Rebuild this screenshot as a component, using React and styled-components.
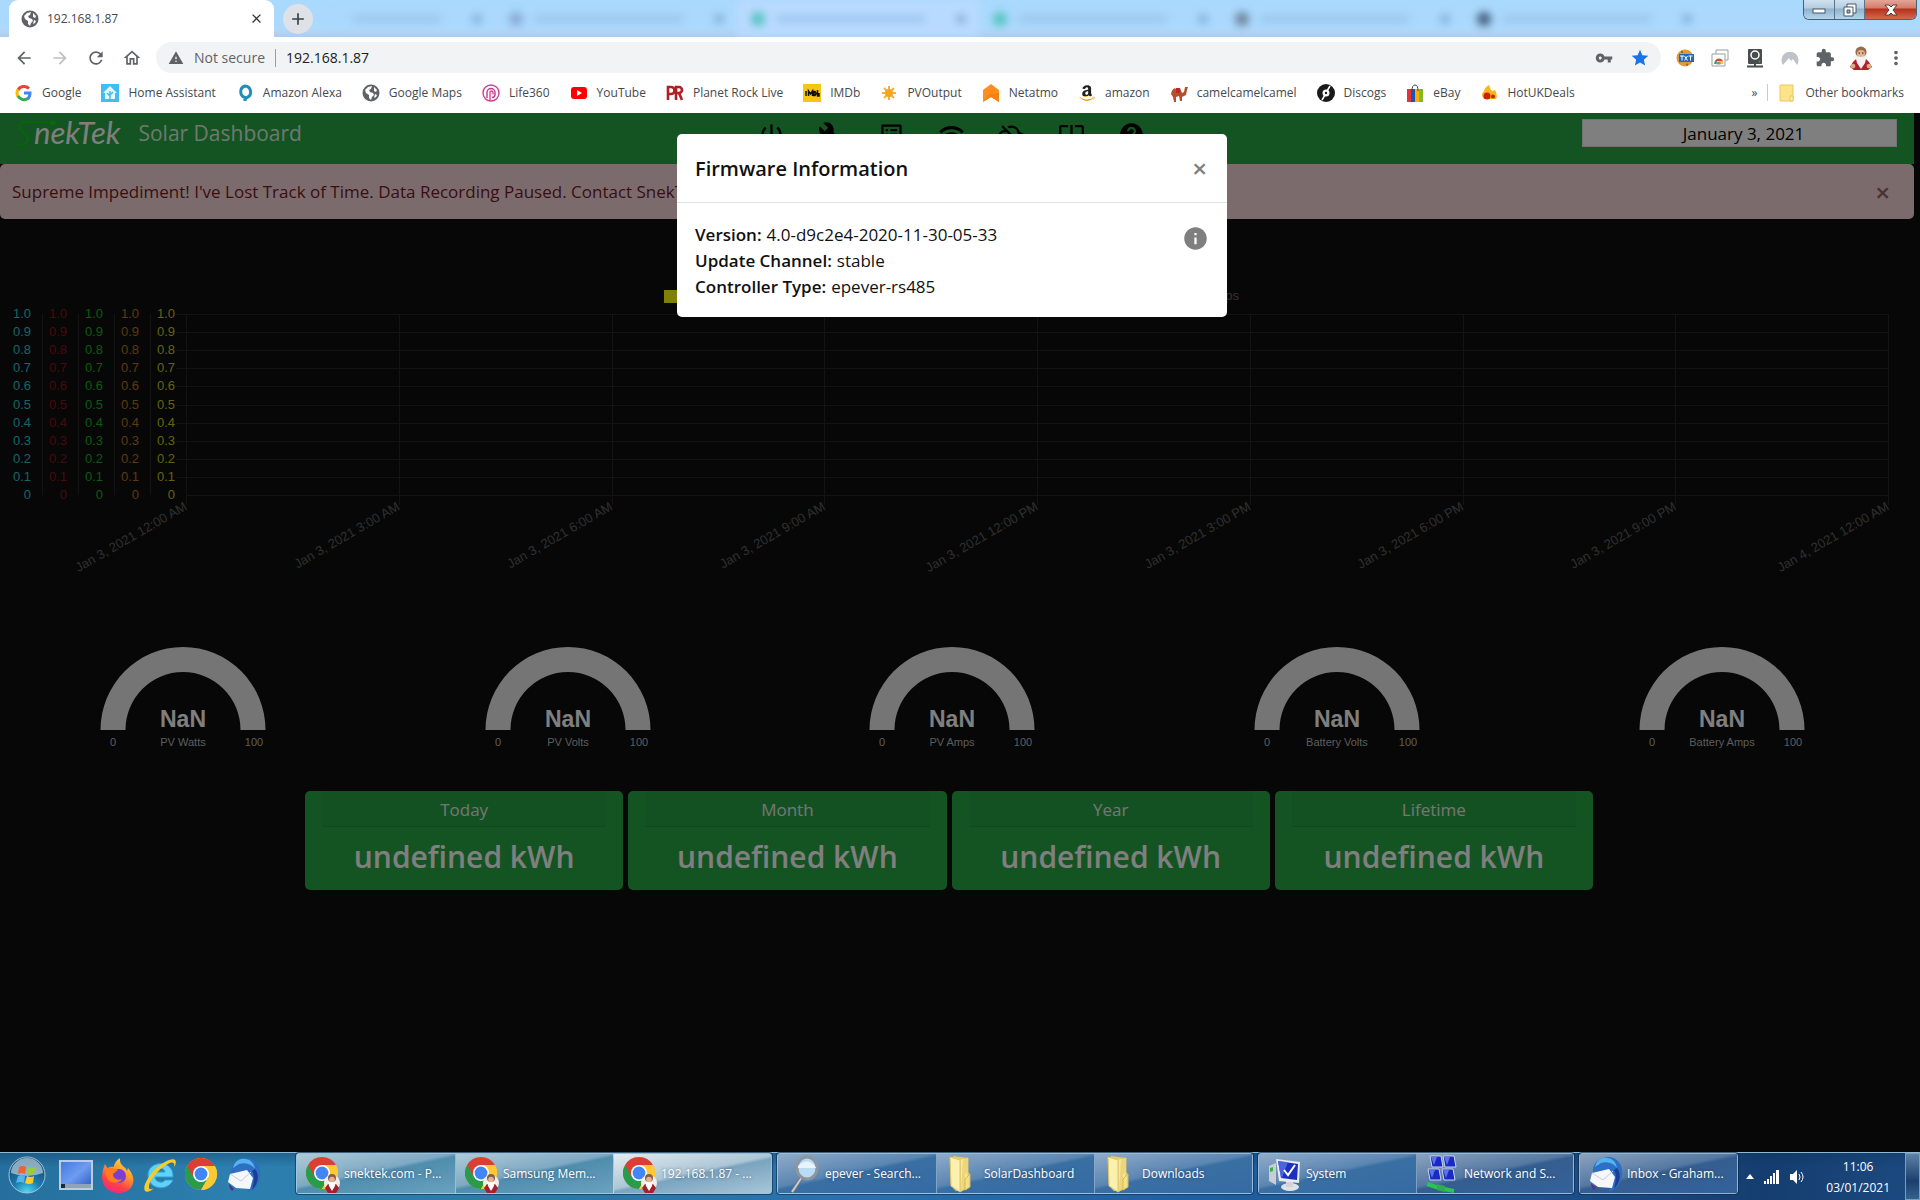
import React from "react";
import styled, { createGlobalStyle } from "styled-components";
import {
  MdPowerSettingsNew,
  MdBuild,
  MdOutlineListAlt,
  MdWifi,
  MdOutlineCloudOff,
  MdSystemUpdateAlt,
  MdHelp,
  MdInfo,
  MdArrowBack,
  MdArrowForward,
  MdRefresh,
  MdOutlineHome,
  MdWarning,
  MdVpnKey,
  MdStar,
  MdExtension,
  MdMoreVert,
  MdPublic,
  MdClose,
  MdAdd,
} from "react-icons/md";
import { FaAmazon } from "react-icons/fa";

const UI = `"Open Sans", "Noto Sans", sans-serif`;
const ARIAL = `"Liberation Sans", Arial, sans-serif`;

const Global = createGlobalStyle`
  *, *::before, *::after { box-sizing: border-box; }
  body { margin: 0; font-family: ${UI}; background: #0e0e0e; }
  button, input { font: inherit; color: inherit; }
  button { background: none; border: 0; padding: 0; cursor: pointer; }
  a { color: inherit; text-decoration: none; }
  svg { display: block; flex: none; }
`;

const Screen = styled.div`
  display: flex;
  flex-direction: column;
  min-height: 100vh;
  overflow: hidden;
`;

/* ---------- browser window ---------- */

const TabStrip = styled.div`
  display: flex;
  align-items: flex-end;
  height: 37px;
  padding: 0 3px 0 9px;
  background: linear-gradient(#a9d9fd 0, #acd9fd 28px, #b4d3f0 32px, #a9cdf0 37px);
  overflow: hidden;
`;

const Tab = styled.div`
  display: flex;
  align-items: center;
  gap: 8px;
  flex: none;
  width: 265px;
  height: 37px;
  padding: 0 8px 0 12px;
  border-radius: 9px 9px 0 0;
  background: #fff;
  color: #45494d;
  font-size: 12px;
`;

const TabTitle = styled.span`
  flex: 1;
`;

const NewTab = styled.button`
  display: grid;
  place-items: center;
  flex: none;
  align-self: center;
  width: 30px;
  height: 30px;
  margin-left: 9px;
  border-radius: 50%;
  background: #dee1e6;
  color: #3c4043;
`;

const GhostTabs = styled.div`
  display: flex;
  flex: 1;
  min-width: 0;
  height: 37px;
  filter: blur(4px);
`;

const GhostTab = styled.div`
  display: flex;
  align-items: center;
  gap: 12px;
  flex: 0 0 242px;
  width: 242px;
  height: 37px;
  padding: 0 14px;
  background: ${(p) => (p.$lit ? "#b9daff" : "transparent")};
  &:first-child {
    flex-basis: 182px;
  }
`;

const GhostIcon = styled.span`
  width: 14px;
  height: 14px;
  border-radius: 50%;
  background: ${(p) => p.$tone};
`;

const GhostTitle = styled.span`
  flex: 1;
  height: 6px;
  background: #97c2ea;
`;

const GhostClose = styled.span`
  width: 8px;
  height: 8px;
  margin: 0 0 0 20px;
  background: #7aa5d2;
`;

const WindowButtons = styled.div`
  display: flex;
  flex: none;
  align-self: flex-start;
  border: 1px solid #4a5f70;
  border-top: 0;
  border-radius: 0 0 6px 6px;
  overflow: hidden;
`;

const WindowButton = styled.button`
  display: grid;
  place-items: center;
  width: ${(p) => (p.$close ? "52px" : "30px")};
  height: 19px;
  border-left: ${(p) => (p.$first ? "0" : "1px solid #5d7486")};
  background: ${(p) =>
    p.$close
      ? "linear-gradient(#e3a598 0, #d37c6b 8px, #b8301a 9px, #d06a4c 19px)"
      : "linear-gradient(#cfe0ee 0, #b5cde0 8px, #8fb1cb 9px, #b4d6ec 19px)"};
`;

const Toolbar = styled.div`
  display: flex;
  align-items: center;
  height: 41px;
  padding: 0 15px 0 14px;
  background: #fff;
  color: #5f6368;
`;

const NavButtons = styled.div`
  display: flex;
  gap: 16px;
  margin-right: 14px;
`;

const IconButton = styled.button`
  display: grid;
  place-items: center;
  width: 20px;
  height: 24px;
  color: ${(p) => (p.$faded ? "#bdc0c4" : "#5f6368")};
`;

const Omnibox = styled.div`
  display: flex;
  align-items: center;
  flex: 1;
  height: 31px;
  padding: 0 11px 0 12px;
  border-radius: 16px;
  background: #f1f3f4;
  font-size: 14px;
`;

const Security = styled.span`
  padding: 0 10px;
  border-right: 1px solid #9aa0a6;
  line-height: 18px;
`;

const Address = styled.input`
  flex: 1;
  min-width: 0;
  padding: 0 0 0 10px;
  border: 0;
  outline: 0;
  background: transparent;
  color: #202124;
`;

const OmniActions = styled.div`
  display: flex;
  gap: 16px;
`;

const Extensions = styled.div`
  display: flex;
  align-items: center;
  gap: 15px;
  margin-left: 14px;
`;

const Bookmarks = styled.nav`
  display: flex;
  align-items: center;
  gap: 20px;
  height: 35px;
  padding: 0 16px 6px 15px;
  background: #fff;
  color: #45494d;
  font-size: 12px;
  white-space: nowrap;
`;

const Bookmark = styled.a`
  display: flex;
  align-items: center;
  gap: 9px;
`;

const OtherMarks = styled.div`
  display: flex;
  align-items: center;
  gap: 10px;
  margin-left: auto;
`;

const Rule = styled.span`
  width: 1px;
  height: 17px;
  background: #c9cbce;
`;

/* ---------- dashboard ---------- */

const Viewport = styled.main`
  position: relative;
  flex: 1;
  padding-right: 6px;
  background: #0e0e0e;
`;

const Navbar = styled.header`
  display: grid;
  grid-template-columns: 1fr auto 1fr;
  height: 51px;
  padding: 6px 17px 0 16px;
  background: #28a745;
`;

const Brand = styled.div`
  display: flex;
  align-items: center;
  height: 27px;
  color: #fff;
  font-size: 21px;
`;

const Logo = styled.span`
  display: flex;
  align-items: center;
  margin-right: 18px;
  font: italic 400 31px/27px Lato, sans-serif;
`;

const BrandTitle = styled.span`
  color: rgba(255, 255, 255, 0.85);
`;

const NavIcons = styled.div`
  display: flex;
  gap: 33px;
  padding: 2px 10px 0 0;
`;

const NavIcon = styled.button`
  height: 27px;
  color: #000;
`;

const DateBox = styled.input`
  justify-self: end;
  width: 315px;
  height: 28px;
  padding: 0 0 0 8px;
  border: 1px solid #e4e4e4;
  background: #fff;
  color: #000;
  font-size: 17px;
  text-align: center;
`;

const Alert = styled.div`
  display: flex;
  align-items: center;
  justify-content: space-between;
  height: 55px;
  padding: 0 24px 0 12px;
  border-radius: 5px;
  background: #f8d7da;
  color: #721c24;
  font-size: 17px;
`;

const CloseButton = styled.button`
  color: ${(p) => p.$tone};
  font-size: 26px;
  font-weight: 600;
  line-height: 26px;
`;

const Chart = styled.svg`
  width: 100%;
  height: auto;
  font-family: ${ARIAL};
  font-size: 13px;
`;

const Gauges = styled.section`
  display: flex;
  margin: 19px 0 36px -9px;
`;

const GaugeCell = styled.div`
  display: flex;
  flex: 1;
  justify-content: center;
`;

const Totals = styled.section`
  display: grid;
  grid-template-columns: repeat(4, 1fr);
  gap: 5px;
  max-width: 1304px;
  margin: 0 auto;
  padding-right: 16px;
`;

const TotalCard = styled.article`
  height: 99px;
  padding: 0 17px;
  border-radius: 5px;
  background: #28a745;
  color: #fff;
  text-align: center;
`;

const TotalHead = styled.h2`
  height: 36px;
  margin: 0;
  border-bottom: 1px solid #239040;
  background: #27a244;
  color: #e6eee8;
  font-size: 17px;
  font-weight: 400;
  line-height: 37px;
`;

const TotalValue = styled.p`
  margin: 0;
  font-size: 30px;
  font-weight: 600;
  line-height: 59px;
`;

/* ---------- modal ---------- */

const Backdrop = styled.div`
  position: absolute;
  inset: 0;
  display: flex;
  justify-content: center;
  align-items: flex-start;
  padding: 21px 16px 0 0;
  background: rgba(0, 0, 0, 0.5);
`;

const Dialog = styled.section`
  width: 550px;
  border-radius: 5px;
  background: #fff;
  color: #111;
`;

const DialogHead = styled.header`
  display: flex;
  align-items: center;
  justify-content: space-between;
  height: 69px;
  padding: 0 20px 0 18px;
  border-bottom: 1px solid #dee2e6;
`;

const DialogTitle = styled.h1`
  margin: 0;
  font-size: 20px;
  font-weight: 600;
`;

const DialogBody = styled.div`
  display: flex;
  justify-content: space-between;
  padding: 19px 18px 17px 18px;
  font-size: 17px;
  line-height: 26px;
`;

const Facts = styled.dl`
  margin: 0;
`;

const Fact = styled.div`
  display: flex;
  gap: 5px;
`;

const Term = styled.dt`
  font-weight: 600;
`;

const Detail = styled.dd`
  margin: 0;
`;

const InfoButton = styled.button`
  height: 26px;
  margin-top: 3px;
  color: #7f7f7f;
`;

/* ---------- taskbar ---------- */

const Taskbar = styled.footer`
  display: flex;
  height: 48px;
  border-top: 1px solid #8db9d3;
  background:
    linear-gradient(rgba(10, 50, 90, 0.35) 0, transparent 14px),
    linear-gradient(to right, #256f9e 0, #2c7fae 12%, #2b78a8 32%, #2a6fac 45%, #205f9f 62%, #1e5391 78%, #153d6f 92%, #1c4a80 100%);
  color: #fff;
`;

const QuickLaunch = styled.div`
  display: flex;
  align-items: center;
  gap: 8px;
  width: 296px;
  flex: none;
  padding: 0 0 3px 7px;
`;

const Launcher = styled.button`
  display: grid;
  place-items: center;
  width: ${(p) => (p.$orb ? "40px" : "34px")};
  height: 38px;
  margin-right: ${(p) => (p.$orb ? "4px" : "0")};
`;

const TaskGroup = styled.div`
  display: flex;
  flex: none;
  height: 41px;
  margin-right: 5px;
  border: 1px solid rgba(225, 240, 250, 0.65);
  border-radius: 3px;
  box-shadow: 0 0 0 1px rgba(10, 40, 70, 0.6);
`;

const washes = {
  teal: "linear-gradient(168deg, #aecbd9 0, #7fa9c2 45%, #4f8dae 50%, #6ba1bf 100%)",
  pale: "linear-gradient(168deg, #e3ecf1 0, #adc6d5 48%, #7aa4c0 53%, #a9c6d8 100%)",
  blue: "linear-gradient(168deg, #8fabc9 0, #5b86b2 45%, #3a6fa3 50%, #346ba3 100%)",
  deep: "linear-gradient(168deg, #8ba3be 0, #5578a2 45%, #355e90 50%, #33629a 100%)",
};

const Task = styled.button`
  display: flex;
  align-items: center;
  gap: 4px;
  width: ${(p) => (p.$narrow ? "157px" : "158px")};
  padding: 0 4px 0 9px;
  background: ${(p) => washes[p.$wash]};
  color: #fff;
  font-size: 12px;
  text-align: left;
  white-space: nowrap;
  text-shadow: 0 0 3px rgba(10, 40, 80, 0.6);
  & + & {
    border-left: 1px solid rgba(220, 235, 245, 0.45);
  }
`;

const Tray = styled.div`
  display: flex;
  align-items: center;
  justify-content: flex-end;
  flex: 1;
  min-width: 0;
`;

const TrayIcons = styled.div`
  display: flex;
  align-items: center;
  gap: 10px;
  margin-right: 20px;
`;

const Clock = styled.div`
  margin-right: 15px;
  font-size: 12px;
  line-height: 21px;
  text-align: center;
`;

const ShowDesktop = styled.button`
  align-self: stretch;
  width: 15px;
  border: 1px solid #7e9dbd;
  background: linear-gradient(#5f81a6, #1b3f6c 60%, #35618f);
`;

/* ---------- small drawings ---------- */

const Gnome = ({ size = 22 }) => (
  <svg width={size} height={size * 1.1} viewBox="0 0 22 24">
    <path d="M3 16l4-4h8l4 4 3 5-4 3H4l-4-3z" fill="#b3202c" />
    <circle cx="3" cy="20" r="2.4" fill="#dca985" />
    <circle cx="19" cy="20" r="2.4" fill="#dca985" />
    <circle cx="11" cy="6" r="5.6" fill="#9a6b4b" />
    <circle cx="11" cy="8" r="4" fill="#e3b493" />
    <path d="M5 9q6 4 12 0l-2 8-4 6-4-6z" fill="#f3f1f2" />
    <circle cx="9.200" cy="7" r="0.800" fill="#432" />
    <circle cx="12.800" cy="7" r="0.800" fill="#432" />
  </svg>
);

const ChromeBall = ({ size = 34, gnome }) => (
  <svg width={size} height={size + 4} viewBox="0 0 34 38">
    <g transform="translate(0 1)">
      <circle cx="16" cy="17" r="16" fill="#fbc02d" />
      <path d="M2.100 9A16 16 0 0 0 16 33l7-12-7-4z" fill="#2a9a4b" />
      <path d="M16 9h13.900A16 16 0 0 1 16 33l7-12z" fill="#fbc934" />
      <path d="M2.100 9A16 16 0 0 1 29.900 9H16l-7 12z" fill="#d93f35" />
      <circle cx="16" cy="17" r="8" fill="#fff" />
      <circle cx="16" cy="17" r="6.400" fill="#4285f4" />
    </g>
    {gnome && (
      <g transform="translate(18 18)">
        <circle cx="8" cy="10" r="8" fill="#f3ece8" />
        <path d="M1 15l3-4h8l3 4-3 5H4z" fill="#a51f2c" />
        <circle cx="8" cy="5" r="4" fill="#8a5c43" />
        <circle cx="8" cy="6.500" r="2.800" fill="#e3b493" />
        <path d="M4 8q4 3 8 0l-1 5-3 5-3-5z" fill="#fff" />
      </g>
    )}
  </svg>
);

const Bird = ({ size = 34 }) => (
  <svg width={size} height={size + 2} viewBox="0 0 34 36">
    <path d="M14 2C26-2 35 8 33 20c-1 9-7 14-13 16 2-4 1-6-2-6L4 20C3 10 6 5 14 2z" fill="#2c6fc4" />
    <path d="M14 2c8-1 13 3 14 10-4-5-9-7-16-5L6 11c1-5 4-8 8-9z" fill="#54b2ee" />
    <path d="M28 12c5 6 3 15-3 21 2-8 3-14 0-19z" fill="#1b3f94" />
    <path d="M3 17l17-4 6 8-3 11-14-1-8-6z" fill="#f6f7fb" />
    <path d="M3 17l11 7 10-9" fill="none" stroke="#c6cbe0" />
    <path d="M2 27l5 5-2 2c-2-2-3-4-3-7z" fill="#552e8e" />
  </svg>
);

const Folder = () => (
  <svg width="34" height="38" viewBox="0 0 34 38">
    <path d="M7 1l15 2v14l2 2v13l-4 3-10 1-3-3z" fill="#e3c968" />
    <path d="M14 4l8-1v29l-8 5z" fill="#f7e79a" stroke="#dcc469" />
    <path d="M17 5l5-2v13l-3 4v13l-4 3z" fill="#ecd57a" />
    <path d="M19 24l5-5v13l-5 3z" fill="#f4e08a" stroke="#d5b850" />
    <path d="M4 2l10 3v32L5 31z" fill="#fbf0ae" stroke="#e0c86a" />
  </svg>
);

const StartOrb = () => (
  <svg width="38" height="38" viewBox="0 0 38 38">
    <defs>
      <radialGradient id="orb" cx=".5" cy="1" r=".9">
        <stop offset="0" stopColor="#4fe0f8" />
        <stop offset=".45" stopColor="#1b79ad" />
        <stop offset="1" stopColor="#174a72" />
      </radialGradient>
    </defs>
    <circle cx="19" cy="19" r="18" fill="url(#orb)" stroke="#9fc4d8" />
    <path d="M3 17a16 15 0 0 1 32 0q-16 6-32 0z" fill="#d6e6ee" opacity=".6" />
    <path d="M11 11q4-2 7 0l-1 7q-3-2-7 0z" fill="#f0622e" />
    <path d="M20 11q4 2 8 0l-2 7q-4 2-7 0z" fill="#9ccb3d" />
    <path d="M10 20q4-2 7 0l-1 7q-4-2-8 0z" fill="#55b5ee" />
    <path d="M19 20q4 2 7 0l-1 7q-4 2-8 0z" fill="#fdc92f" />
  </svg>
);

const DesktopIcon = () => (
  <svg width="34" height="30" viewBox="0 0 34 30">
    <defs>
      <linearGradient id="desk" x1="0" y1="0" x2="1" y2="1">
        <stop offset="0" stopColor="#3f78dc" />
        <stop offset=".5" stopColor="#6f9bf0" />
        <stop offset="1" stopColor="#2757bf" />
      </linearGradient>
    </defs>
    <rect x="1" y="1" width="32" height="28" fill="url(#desk)" stroke="#b9cfdd" strokeWidth="2" />
    <path d="M2 24h30v4H2z" fill="#8ea4ba" />
    <path d="M2 24h4v4H2z" fill="#1c2b40" />
  </svg>
);

const Firefox = () => (
  <svg width="34" height="36" viewBox="0 0 34 36">
    <defs>
      <linearGradient id="fox" x1=".8" y1="0" x2=".3" y2="1">
        <stop offset="0" stopColor="#ffe14a" />
        <stop offset=".4" stopColor="#ff9a2a" />
        <stop offset=".75" stopColor="#ff3f4a" />
        <stop offset="1" stopColor="#f0287e" />
      </linearGradient>
    </defs>
    <path d="M4 7q1 3 3 4 3-2 6-1 0-5 6-9-1 5 4 9 2 1 3 4l1-3c5 6 7 12 4 18-3 5-8 7-14 7C8 36 1 29 1 20q0-7 3-13z" fill="url(#fox)" />
    <circle cx="18" cy="19" r="7" fill="#7b3fd0" />
    <path d="M5 12c5-3 8 0 12 1l-5 4c0 4 4 7 9 5-3 6-15 5-16-4z" fill="#ff7a20" />
  </svg>
);

const Explorer = () => (
  <svg width="34" height="36" viewBox="0 0 34 36">
    <path
      d="M30 20H12c0 5 8 7 10 3h8c-5 12-25 10-25-5C5 3 31 2 30 20zM12 15h10c-1-5-9-5-10 0z"
      fill="#63d0f7"
      stroke="#2b9fdb"
    />
    <path d="M2 34C-2 28 12 8 26 3c8-3 8 3 5 7 1-4-1-6-6-3C14 13 5 25 6 31c1 2 3 1 5 0-3 3-7 5-9 3z" fill="#f7cb2d" />
  </svg>
);

const Magnifier = () => (
  <svg width="34" height="38" viewBox="0 0 34 38">
    <path d="M15 22L5 37" stroke="#6f7379" strokeWidth="4" />
    <path d="M15 22L5 37" stroke="#c9ccd0" strokeWidth="2" />
    <ellipse cx="20" cy="13" rx="10" ry="11" fill="#b8dcf6" stroke="#8f959d" strokeWidth="3" />
    <path d="M11 11q9-9 17 0l1 2H11z" fill="#e7f4fd" />
  </svg>
);

const SystemIcon = () => (
  <svg width="34" height="36" viewBox="0 0 34 36">
    <path d="M1 10l7-3v22l-7-4z" fill="#c9ced3" />
    <path d="M2 12l3-1v4l-3 1z" fill="#3fae49" />
    <ellipse cx="22" cy="31" rx="9" ry="4" fill="#dfe3e6" />
    <path d="M18 25h7v6h-7z" fill="#cfd4d8" />
    <path d="M8 3l24 3-1 21-20-2z" fill="#e8ecef" />
    <path d="M10 5l20 3-1 16-16-2z" fill="#1b2fc0" />
    <path d="M10 5l10 1-6 16h-1z" fill="#5f7bea" opacity=".7" />
    <path d="M16 14l4 5 7-10" stroke="#fff" strokeWidth="2" fill="none" />
  </svg>
);

const NetworkIcon = () => (
  <svg width="34" height="38" viewBox="0 0 34 38">
    {[
      [4, 1],
      [17, 1],
      [2, 14],
      [16, 14],
    ].map(([x, y]) => (
      <g key={`${x}-${y}`}>
        <path d={`M${x} ${y}h11l2 11h-11z`} fill="#1829c4" stroke="#c8d4ea" />
        <path d={`M${x + 1} ${y + 1}h6l-3 8z`} fill="#6f86ee" opacity=".8" />
      </g>
    ))}
    <path d="M1 29l12 4 15 3" fill="none" stroke="#29c453" strokeWidth="4" />
    <path d="M11 29l8 2v6l-8-2z" fill="#2fae4e" />
  </svg>
);

const Signal = () => (
  <svg width="16" height="14" viewBox="0 0 16 14" fill="#fff">
    <path d="M0 11h2v3H0zM3 9h2v5H3zM6 6h2v8H6zM9 3h2v11H9zM12 0h3v14h-3z" />
  </svg>
);

const Speaker = () => (
  <svg width="16" height="16" viewBox="0 0 16 16">
    <path d="M0 5h3l4-4v14l-4-4H0z" fill="#fff" />
    <path d="M9 5q2 3 0 6M11 3q4 5 0 10" fill="none" stroke="#fff" />
  </svg>
);

/* ---------- favicons ---------- */

const Fav = ({ children }) => (
  <svg width="18" height="18" viewBox="0 0 18 18">
    {children}
  </svg>
);

const Globe = () => (
  <svg width="18" height="18" viewBox="0 0 18 18">
    <circle cx="9" cy="9" r="8.500" fill="#5f6368" />
    <path d="M3 6l3-3 4-1-1 3-2 1 1 2 3 1 1 2-2 2-1 3-2-2V11L4 9z" fill="#fff" />
    <path d="M12 3l3 3-1 2-2-1zM13 10l2 1-1 2-2 1z" fill="#fff" />
  </svg>
);

const bookmarks = [
  ["Google", <Fav key="g">
    <path d="M14 4.500A7 7 0 0 0 3 6" fill="none" stroke="#ea4335" strokeWidth="3" />
    <path d="M3 5.500a7 7 0 0 0 0 7" fill="none" stroke="#fbbc05" strokeWidth="3" />
    <path d="M3 12a7 7 0 0 0 10 2.500" fill="none" stroke="#34a853" strokeWidth="3" />
    <path d="M9 9h6q0 4-2.500 6" fill="none" stroke="#4285f4" strokeWidth="3" />
  </Fav>],
  ["Home Assistant", <Fav key="h">
    <rect width="18" height="18" fill="#41bdf5" />
    <path d="M9 2l7 7h-2v6H4V9H2z" fill="#e8f7fe" />
    <path d="M9 15V7M9 12l-3-3M9 11l3-3" stroke="#41bdf5" strokeWidth="1.500" />
  </Fav>],
  ["Amazon Alexa", <Fav key="a">
    <path d="M9 2a6 6 0 0 1 2 11.500Q9 14 9 17v-3.500A6 6 0 0 1 9 2z" fill="#fff" stroke="#1f8fb5" strokeWidth="3" />
  </Fav>],
  ["Google Maps", <Globe key="m" />],
  ["Life360", <Fav key="l">
    <g fill="none" stroke="#b23aa0" strokeWidth="1.400">
      <circle cx="9" cy="9" r="8" stroke="#cf3f8c" />
      <path d="M5 14V8.500a4 4 0 0 1 8 0v2a3 3 0 0 1-3 3" />
      <path d="M8 16V8.500a1.500 1.500 0 0 1 3 0v2" stroke="#e0457c" />
    </g>
  </Fav>],
  ["YouTube", <Fav key="y">
    <rect x="1" y="3" width="16" height="12" rx="3" fill="#f00" />
    <path d="M7 6l5 3-5 3z" fill="#fff" />
  </Fav>],
  ["Planet Rock Live", <Fav key="p">
    <path d="M2 16V3h3a3 3 0 0 1 0 7H3M10 16V3h3a3 3 0 0 1 0 6h-2M13 9l3 7" fill="none" stroke="#b01f24" strokeWidth="2.600" />
  </Fav>],
  ["IMDb", <Fav key="i">
    <rect width="18" height="18" fill="#f5c518" />
    <path d="M3 7v5M5.500 12V7l2 3 2-3v5M11 7.500h1q2 2 0 4h-1zM14.500 6v6h1.500V9" fill="none" stroke="#111" strokeWidth="1.500" />
  </Fav>],
  ["PVOutput", <Fav key="v">
    <path d="M9 2v14M2 9h14M4 4l10 10M14 4L4 14" stroke="#f4b13e" strokeWidth="2" />
    <circle cx="9" cy="9" r="4" fill="#f7a520" />
  </Fav>],
  ["Netatmo", <Fav key="n">
    <path d="M9 0l8 6v12l-8-5-8 5V6z" fill="#ff8d1f" />
    <path d="M17 9v9l-8-5-8 5 6-8z" fill="#f58312" />
  </Fav>],
  ["amazon", <FaAmazon key="z" size={18} fill="url(#smile)" />],
  ["camelcamelcamel", <Fav key="c">
    <path d="M1 10q1-5 4-6l2 3 3-3 2 5 2-1 1-5 3 0-1 3-1 5-4 2v4h-2l-1-5-3 1v5H4l-1-5z" fill="#b5502c" />
    <path d="M6 4h4v5H6z" fill="#c2252b" />
  </Fav>],
  ["Discogs", <Fav key="d">
    <circle cx="9" cy="9" r="9" fill="#1a1a1a" />
    <circle cx="9" cy="9" r="3.500" fill="#fff" />
    <circle cx="9" cy="9" r="1.200" fill="#1a1a1a" />
    <path d="M13 2l-3 5M5 16l3-5" stroke="#fff" strokeWidth="1.500" />
  </Fav>],
  ["eBay", <Fav key="e">
    <path d="M1 5h4v13H1z" fill="#e53238" />
    <path d="M5 5h4v13H5z" fill="#1a56b8" />
    <path d="M9 5h4v13H9z" fill="#f5af02" />
    <path d="M13 5h4v13h-4z" fill="#86b817" />
    <path d="M6 7q0-6 3-6t3 6" fill="none" stroke="#444" />
  </Fav>],
  ["HotUKDeals", <Fav key="k">
    <path d="M9 1q1 4 3 6l3-1q3 6 1 9H4q-4-4 0-8 1-4 5-6z" fill="#fdb51c" />
    <circle cx="7" cy="12" r="3.500" fill="#c9210e" />
    <circle cx="13" cy="12.500" r="2" fill="#c9210e" />
  </Fav>],
];

/* ---------- dashboard parts ---------- */

const GRID = { left: 186, right: 1888, top: 95, step: 18.1 };
const axes = ["#28c8d4", "#941414", "#18b41f", "#b87220", "#c8c420"];
const ticks = ["1.0", "0.9", "0.8", "0.7", "0.6", "0.5", "0.4", "0.3", "0.2", "0.1", "0"];
const hours = [
  "Jan 3, 2021 12:00 AM",
  "Jan 3, 2021 3:00 AM",
  "Jan 3, 2021 6:00 AM",
  "Jan 3, 2021 9:00 AM",
  "Jan 3, 2021 12:00 PM",
  "Jan 3, 2021 3:00 PM",
  "Jan 3, 2021 6:00 PM",
  "Jan 3, 2021 9:00 PM",
  "Jan 4, 2021 12:00 AM",
];

const History = () => {
  const bottom = GRID.top + GRID.step * 10;
  const gap = (GRID.right - GRID.left) / 8;
  return (
    <Chart viewBox="0 0 1914 409" role="img" aria-label="Solar history">
      <rect x="664" y="71" width="43" height="13" fill="#ffff00" />
      <text x="1239" y="81" textAnchor="end" fill="#666">PV Amps</text>
      <g stroke="#262626" shapeRendering="crispEdges">
        {ticks.map((t, i) => {
          const y = Math.round(GRID.top + GRID.step * i);
          return <line key={t} x1={i === 10 ? GRID.left : 176} x2={GRID.right} y1={y} y2={y} />;
        })}
        {hours.map((h, i) => {
          const x = Math.round(GRID.left + gap * i);
          return <line key={h} x1={x} x2={x} y1={GRID.top} y2={bottom + 10} />;
        })}
        {[42, 78, 114, 150].map((x) => (
          <line key={x} x1={x} x2={x} y1={GRID.top} y2={bottom} />
        ))}
      </g>
      {axes.map((color, a) => (
        <g key={color} fill={color} textAnchor="end">
          {ticks.map((t, i) => (
            <text key={t} x={31 + a * 36} y={Math.round(GRID.top + 4 + GRID.step * i)}>
              {t}
            </text>
          ))}
        </g>
      ))}
      <g fill="#606060" textAnchor="end">
        {hours.map((h, i) => (
          <text key={h} transform={`translate(${GRID.left + 2 + gap * i} 290) rotate(-30)`}>
            {h}
          </text>
        ))}
      </g>
    </Chart>
  );
};

const GaugeArt = styled.svg`
  font-family: ${ARIAL};
  font-size: 11px;
  text-anchor: middle;
`;

const Gauge = ({ label }) => (
  <GaugeCell>
    <GaugeArt width="184" height="108" viewBox="0 0 184 108">
      <path d="M9.500 83a82.500 83 0 0 1 165 0h-25a57.500 58 0 0 0-115 0z" fill="#edebeb" />
      <text x="92" y="80" fontSize="23" fontWeight="700" fill="#fff">NaN</text>
      <g fill="#b8b8b8">
        <text x="22" y="99">0</text>
        <text x="92" y="99">{label}</text>
        <text x="163" y="99">100</text>
      </g>
    </GaugeArt>
  </GaugeCell>
);

const ghosts = [
  { tone: "#a9d9fd" },
  { tone: "#8aa6d6" },
  { tone: "#4fc3bd", lit: true },
  { tone: "#4fc3bd" },
  { tone: "#6b7f96" },
  { tone: "#3d5872" },
];

const taskGroups = [
  [
    ["snektek.com - P...", <ChromeBall key="1" gnome />, "teal"],
    ["Samsung Mem...", <ChromeBall key="2" gnome />, "teal"],
    ["192.168.1.87 - ...", <ChromeBall key="3" gnome />, "pale"],
  ],
  [
    ["epever - Search...", <Magnifier key="4" />, "blue"],
    ["SolarDashboard", <Folder key="5" />, "blue"],
    ["Downloads", <Folder key="6" />, "blue"],
  ],
  [
    ["System", <SystemIcon key="7" />, "blue"],
    ["Network and S...", <NetworkIcon key="8" />, "deep"],
  ],
  [["Inbox - Graham...", <Bird key="9" />, "deep"]],
];

export default function App() {
  return (
    <Screen>
      <Global />
      <TabStrip>
        <Tab>
          <Globe />
          <TabTitle>192.168.1.87</TabTitle>
          <IconButton aria-label="Close tab"><MdClose size={15} color="#333" /></IconButton>
        </Tab>
        <NewTab aria-label="New tab"><MdAdd size={20} /></NewTab>
        <GhostTabs aria-hidden="true">
          {ghosts.map((g, i) => (
            <GhostTab key={i} $lit={g.lit}>
              <GhostIcon $tone={g.tone} />
              <GhostTitle />
              <GhostClose />
            </GhostTab>
          ))}
        </GhostTabs>
        <WindowButtons>
          <WindowButton $first aria-label="Minimise">
            <svg width="14" height="8" viewBox="0 0 14 8"><rect x="1" y="3" width="12" height="4" fill="#fff" stroke="#46566a" /></svg>
          </WindowButton>
          <WindowButton aria-label="Restore">
            <svg width="14" height="14" viewBox="0 0 14 14" fill="#fff" stroke="#46566a">
              <path d="M4 1h9v9H4z" />
              <path d="M1 4h9v9H1z" />
              <path d="M4 7h3v3H4z" fill="#8fb1cb" />
            </svg>
          </WindowButton>
          <WindowButton $close aria-label="Close">
            <svg width="14" height="12" viewBox="0 0 14 12">
              <path d="M1 1h4l2 2 2-2h4L9 6l4 5H9L7 9l-2 2H1l4-5z" fill="#fff" stroke="#5c3a3a" />
            </svg>
          </WindowButton>
        </WindowButtons>
      </TabStrip>

      <Toolbar>
        <NavButtons>
          <IconButton aria-label="Back"><MdArrowBack size={20} /></IconButton>
          <IconButton $faded aria-label="Forward"><MdArrowForward size={20} /></IconButton>
          <IconButton aria-label="Reload"><MdRefresh size={20} /></IconButton>
          <IconButton aria-label="Home"><MdOutlineHome size={20} /></IconButton>
        </NavButtons>
        <Omnibox>
          <MdWarning size={16} />
          <Security>Not secure</Security>
          <Address aria-label="Address" defaultValue="192.168.1.87" />
          <OmniActions>
            <IconButton aria-label="Passwords"><MdVpnKey size={18} /></IconButton>
            <IconButton aria-label="Bookmark this page"><MdStar size={20} color="#1a73e8" /></IconButton>
          </OmniActions>
        </Omnibox>
        <Extensions>
          <IconButton aria-label="Text extension">
            <svg width="18" height="18" viewBox="0 0 18 18">
              <circle cx="9" cy="9" r="8.500" fill="#dd9b3e" />
              <circle cx="6" cy="3" r="1" fill="#8a5a1c" />
              <circle cx="11" cy="15.500" r="1" fill="#8a5a1c" />
              <rect x="3" y="5" width="15" height="8" fill="#2468b8" />
              <path d="M4 7h4M6 7v4.500M8.500 7l3 4.500M11.500 7l-3 4.500M12.500 7h4M14.500 7v4.500" stroke="#fff" />
            </svg>
          </IconButton>
          <IconButton aria-label="Chrome extension">
            <svg width="18" height="18" viewBox="0 0 18 18" fill="#fff" stroke="#9a9da1">
              <path d="M5 1h12v10H5z" />
              <path d="M1 5h13v12H1z" />
              <path d="M3 15a4.500 4.500 0 0 1 2.500-4l2 4z" fill="#34a853" stroke="none" />
              <path d="M4 12a4.500 4.500 0 0 1 8 0z" fill="#e04336" stroke="none" />
              <path d="M8 12h4a4.500 4.500 0 0 1 0 3H8z" fill="#fbc934" stroke="none" />
              <path d="M5.500 15a2 2 0 0 1 4 0z" fill="#4285f4" />
            </svg>
          </IconButton>
          <IconButton aria-label="Camera extension">
            <svg width="18" height="20" viewBox="0 0 18 20">
              <rect x="2" y="1" width="14" height="15" rx="1" fill="#4a4d50" />
              <circle cx="9" cy="7" r="4" fill="#4a4d50" stroke="#fff" strokeWidth="1.500" />
              <circle cx="13.500" cy="13.500" r="1" fill="#2fa84f" />
              <path d="M9 15v4M1 18.500h16" stroke="#4a4d50" strokeWidth="2" />
            </svg>
          </IconButton>
          <IconButton aria-label="VPN extension">
            <svg width="18" height="16" viewBox="0 0 18 16">
              <path d="M2 15A8.500 8.500 0 1 1 16 15l-4-6-2 2-2-3z" fill="#bfc2c6" />
            </svg>
          </IconButton>
          <IconButton aria-label="Extensions"><MdExtension size={20} /></IconButton>
          <IconButton aria-label="Profile"><Gnome /></IconButton>
          <IconButton aria-label="Menu"><MdMoreVert size={22} /></IconButton>
        </Extensions>
      </Toolbar>

      <Bookmarks>
        <svg width="0" height="0" style={{ marginRight: -20 }} aria-hidden="true">
          <linearGradient id="smile" x1="0" y1="0" x2="0" y2="1">
            <stop offset=".7" stopColor="#221f1f" />
            <stop offset=".7" stopColor="#f79a1c" />
          </linearGradient>
        </svg>
        {bookmarks.map(([name, icon]) => (
          <Bookmark key={name} href="#">
            {icon}
            {name}
          </Bookmark>
        ))}
        <OtherMarks>
          <span>»</span>
          <Rule />
          <Bookmark href="#">
            <Fav>
              <path d="M2 1h13v16H2z" fill="#fde48a" stroke="#ecc75a" />
              <path d="M12 12h3v5h-3z" fill="#fff0b0" stroke="#ecc75a" />
            </Fav>
            Other bookmarks
          </Bookmark>
        </OtherMarks>
      </Bookmarks>

      <Viewport>
        <Navbar>
          <Brand>
            <Logo>
              <svg width="18" height="26" viewBox="0 0 18 26" overflow="visible">
                <path d="M38 3L28 2 9 2Q2 3 4 8q1 3 6 6 4 5 0 9-3 2-9 2" fill="none" stroke="#00d800" strokeWidth="1.500" />
                <path d="M34 2q3-3 7 1-3 3-7 1z" fill="#00e000" />
              </svg>
              nekTek
            </Logo>
            <BrandTitle>Solar Dashboard</BrandTitle>
          </Brand>
          <NavIcons>
            <NavIcon aria-label="Power"><MdPowerSettingsNew size={27} /></NavIcon>
            <NavIcon aria-label="Settings"><MdBuild size={27} /></NavIcon>
            <NavIcon aria-label="Log"><MdOutlineListAlt size={27} /></NavIcon>
            <NavIcon aria-label="Wireless"><MdWifi size={27} /></NavIcon>
            <NavIcon aria-label="Cloud"><MdOutlineCloudOff size={27} /></NavIcon>
            <NavIcon aria-label="Update"><MdSystemUpdateAlt size={27} /></NavIcon>
            <NavIcon aria-label="Help"><MdHelp size={27} /></NavIcon>
          </NavIcons>
          <DateBox aria-label="Date" defaultValue="January 3, 2021" />
        </Navbar>
        <Alert role="alert">
          <span>Supreme Impediment! I've Lost Track of Time. Data Recording Paused. Contact SnekTek.</span>
          <CloseButton $tone="#99606a" aria-label="Dismiss">×</CloseButton>
        </Alert>
        <History />
        <Gauges>
          {["PV Watts", "PV Volts", "PV Amps", "Battery Volts", "Battery Amps"].map((g) => (
            <Gauge key={g} label={g} />
          ))}
        </Gauges>
        <Totals>
          {["Today", "Month", "Year", "Lifetime"].map((t) => (
            <TotalCard key={t}>
              <TotalHead>{t}</TotalHead>
              <TotalValue>undefined kWh</TotalValue>
            </TotalCard>
          ))}
        </Totals>

        <Backdrop>
          <Dialog role="dialog" aria-labelledby="firmware-title">
            <DialogHead>
              <DialogTitle id="firmware-title">Firmware Information</DialogTitle>
              <CloseButton $tone="#7f7f7f" aria-label="Close dialog">×</CloseButton>
            </DialogHead>
            <DialogBody>
              <Facts>
                <Fact><Term>Version:</Term><Detail>4.0-d9c2e4-2020-11-30-05-33</Detail></Fact>
                <Fact><Term>Update Channel:</Term><Detail>stable</Detail></Fact>
                <Fact><Term>Controller Type:</Term><Detail>epever-rs485</Detail></Fact>
              </Facts>
              <InfoButton aria-label="More information"><MdInfo size={27} /></InfoButton>
            </DialogBody>
          </Dialog>
        </Backdrop>
      </Viewport>

      <Taskbar>
        <QuickLaunch>
          <Launcher $orb aria-label="Start"><StartOrb /></Launcher>
          <Launcher aria-label="Desktop"><DesktopIcon /></Launcher>
          <Launcher aria-label="Firefox"><Firefox /></Launcher>
          <Launcher aria-label="Internet Explorer"><Explorer /></Launcher>
          <Launcher aria-label="Chrome"><ChromeBall /></Launcher>
          <Launcher aria-label="Thunderbird"><Bird /></Launcher>
        </QuickLaunch>
        {taskGroups.map((group, i) => (
          <TaskGroup key={i}>
            {group.map(([name, icon, wash]) => (
              <Task key={name} $wash={wash} $narrow={i > 1}>
                {icon}
                {name}
              </Task>
            ))}
          </TaskGroup>
        ))}
        <Tray>
          <TrayIcons>
            <svg width="8" height="5" viewBox="0 0 8 5"><path d="M0 5l4-5 4 5z" fill="#fff" /></svg>
            <Signal />
            <Speaker />
          </TrayIcons>
          <Clock>
            <div>11:06</div>
            <div>03/01/2021</div>
          </Clock>
          <ShowDesktop aria-label="Show desktop" />
        </Tray>
      </Taskbar>
    </Screen>
  );
}
